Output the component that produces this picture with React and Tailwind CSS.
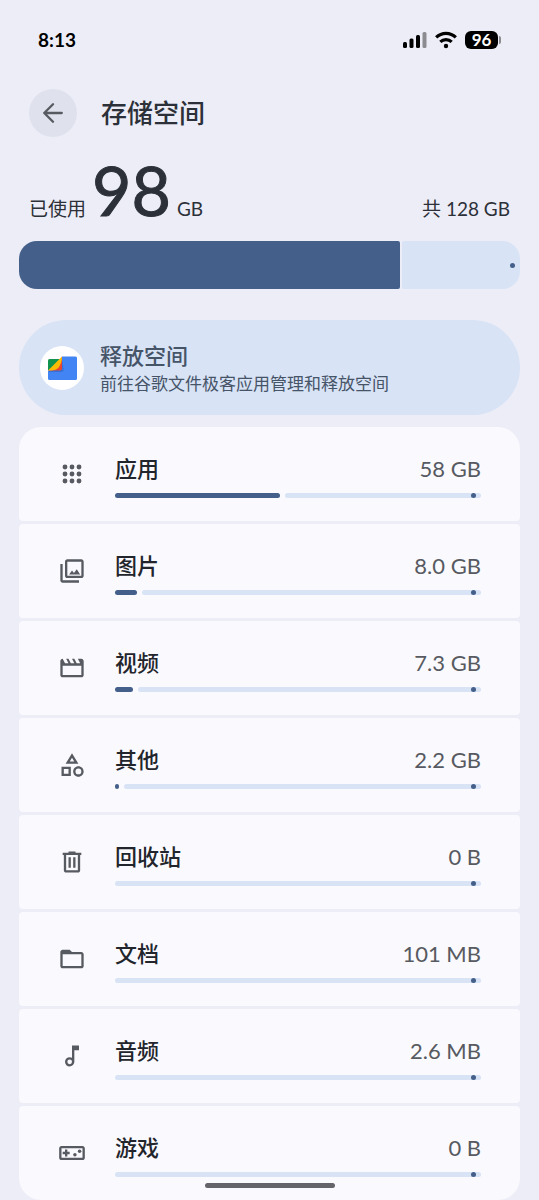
import React from 'react';

const AppsIcon = () => (
  <g>
    {[6, 12, 18].map((y) =>
      [6, 12, 18].map((x) => <circle key={`${x}-${y}`} cx={x} cy={y} r="2.1" />)
    )}
  </g>
);

const ImagesIcon = () => (
  <g>
    <path d="M20 4v12H8V4h12m0-2H8c-1.100 0-2 .9-2 2v12c0 1.100.9 2 2 2h12c1.100 0 2-.9 2-2V4c0-1.100-.9-2-2-2z" />
    <path d="M9.500 15l2.500-3.400 1.700 2.200 2.400-3.200L19 15z" />
    <path d="M2 6v14c0 1.100.9 2 2 2h14v-2H4V6H2z" />
  </g>
);

const VideoIcon = () => (
  <path d="M4 4l2 4h3L7 4h2l2 4h3l-2-4h2l2 4h3l-2-4h3c1.100 0 2 .9 2 2v12c0 1.100-.9 2-2 2H4c-1.100 0-2-.9-2-2V6c0-1.100.9-2 2-2zm0 6v8h16v-8H4z" />
);

const OtherIcon = () => (
  <path d="M12 2l-5.500 9h11L12 2zm0 3.840L13.930 9h-3.870L12 5.840zM17.500 13c-2.490 0-4.500 2.010-4.500 4.500s2.010 4.500 4.500 4.500 4.500-2.010 4.500-4.500-2.010-4.500-4.500-4.500zm0 7a2.500 2.500 0 010-5 2.500 2.500 0 010 5zM3 21.500h8v-8H3v8zm2-6h4v4H5v-4z" />
);

const TrashIcon = () => (
  <path d="M9 3v1H4v2h1v13c0 1.100.9 2 2 2h10c1.100 0 2-.9 2-2V6h1V4h-5V3H9zM7 6h10v13H7V6zm2 2v9h2V8H9zm4 0v9h2V8h-2z" />
);

const FolderIcon = () => (
  <path d="M4 20c-1.100 0-2-.9-2-2V6c0-1.100.9-2 2-2h6l2 2h8c1.100 0 2 .9 2 2v10c0 1.100-.9 2-2 2H4zm0-2h16V8H4v10z" />
);

const AudioIcon = () => (
  <path d="M12 3l.01 10.550c-.59-.34-1.270-.55-2-.55a4 4 0 100 8c2.220 0 3.990-1.790 3.990-4V7h4V3h-6zm-1.990 16a2 2 0 010-4 2 2 0 010 4z" />
);

const GamesIcon = () => (
  <g>
    <path d="M21 6H3c-1.100 0-2 .9-2 2v8c0 1.100.9 2 2 2h18c1.100 0 2-.9 2-2V8c0-1.100-.9-2-2-2zm0 10H3V8h18v8z" />
    <path d="M6 15h2v-2h2v-2H8V9H6v2H4v2h2z" />
    <circle cx="14.500" cy="13.500" r="1.500" />
    <circle cx="18.500" cy="10.500" r="1.500" />
  </g>
);

const categories = [
  { name: '应用', size: '58 GB', percent: 45, icon: AppsIcon },
  { name: '图片', size: '8.0 GB', percent: 6, icon: ImagesIcon },
  { name: '视频', size: '7.3 GB', percent: 5, icon: VideoIcon },
  { name: '其他', size: '2.2 GB', percent: 1, icon: OtherIcon },
  { name: '回收站', size: '0 B', percent: 0, icon: TrashIcon },
  { name: '文档', size: '101 MB', percent: 0, icon: FolderIcon },
  { name: '音频', size: '2.6 MB', percent: 0, icon: AudioIcon },
  { name: '游戏', size: '0 B', percent: 0, icon: GamesIcon },
];

const StatusBar = () => (
  <div className="flex h-20 items-center justify-between px-[19px] text-black">
    <span className="text-[19px] leading-6 font-bold">8:13</span>
    <div className="flex items-center gap-2">
      <svg width="24" height="18" viewBox="0 0 24 18" aria-hidden="true">
        <rect x="0" y="11" width="4" height="6" rx="1.500" />
        <rect x="6.500" y="7.500" width="4" height="9.500" rx="1.500" />
        <rect x="13" y="4" width="4" height="13" rx="1.500" />
        <rect x="19.500" y="1" width="4" height="16" rx="1.500" fill="#8b8b90" />
      </svg>
      <svg width="22" height="18" viewBox="0 0 22 18" fill="none" stroke="currentColor" strokeWidth="3.200" aria-hidden="true">
        <path d="M1.200 6.400C6.700.9 15.300.9 20.800 6.400" />
        <path d="M5.300 10.800c3.200-3 8.200-3 11.400 0" />
        <circle cx="11" cy="15" r="2.200" fill="currentColor" stroke="none" />
      </svg>
      <div className="flex items-center gap-px">
        <span className="flex h-[18px] w-[33px] items-center justify-center rounded-md bg-black text-[17px] leading-[18px] font-bold text-white">
          96
        </span>
        <span className="h-2 w-[2px] rounded-r-full bg-[#8b8b90]" />
      </div>
    </div>
  </div>
);

const FilesLogo = () => (
  <svg className="size-11 shrink-0" viewBox="0 0 44 44" aria-hidden="true">
    <circle cx="22" cy="22" r="22" fill="#fff" />
    <path d="M8 14.500a1.500 1.500 0 011.500-1.500H20v11H8z" fill="#12924f" />
    <path d="M22 10.500h13.500A1.500 1.500 0 0137 12v20.500a1.500 1.500 0 01-1.500 1.500h-26A1.500 1.500 0 018 32.500V24.500l14-6z" fill="#4284f3" />
    <path d="M22 14l1.500 9.500a2.500 2.500 0 01-2.500 2.500H9l1-2z" fill="#3570d8" />
    <path d="M22 10.500v12a2 2 0 01-2 2H8L18 18z" fill="#e94335" />
    <path d="M22 10.500L8 24.500c5 0 9-.5 11-3.500 1.800-2.700 3-6 3-10.500z" fill="#fbbc05" />
  </svg>
);

const UsageTrack = ({ name, percent }) => (
  <div
    role="progressbar"
    aria-label={name}
    aria-valuenow={percent}
    className="flex h-[5px] gap-[5px]"
  >
    {percent > 0 && (
      <span className="shrink-0 rounded-full bg-[#44608a]" style={{ width: `${percent}%` }} />
    )}
    <span className="flex flex-1 justify-end rounded-full bg-[#d8e3f6] pr-[5px]">
      <span className="size-[5px] rounded-full bg-[#44608a]" />
    </span>
  </div>
);

const CategoryRow = ({ category }) => {
  const Icon = category.icon;
  return (
    <li className="overflow-hidden rounded bg-[#faf9fe] first:rounded-t-[22px] last:rounded-b-[22px]">
      <a href="#" className="flex h-[94px] items-center px-[39px]">
        <svg className="size-7 shrink-0 text-[#575a61]" viewBox="0 0 24 24" fill="currentColor" aria-hidden="true">
          <Icon />
        </svg>
        <div className="ml-[29px] flex-1 pt-[2px]">
          <div className="mb-2 flex items-center justify-between text-[22px] leading-8">
            <span className="font-medium text-[#22252b]">{category.name}</span>
            <span className="text-[#575a61]">{category.size}</span>
          </div>
          <UsageTrack name={category.name} percent={category.percent} />
        </div>
      </a>
    </li>
  );
};

const App = () => {
  return (
    <div
      lang="zh-CN"
      className="min-h-screen bg-[#ecedf6] px-[19px] font-['Lato','Noto_Sans_CJK_SC',sans-serif] text-[#2c3038]"
    >
      <StatusBar />

      <header className="flex items-center gap-6 px-[10px] pt-[9px]">
        <button
          type="button"
          aria-label="返回"
          className="flex size-12 items-center justify-center rounded-full bg-[#dfe2ed] text-[#575a61]"
        >
          <svg className="size-7" viewBox="0 0 24 24" fill="none" stroke="currentColor" strokeWidth="2" strokeLinecap="round" strokeLinejoin="round" aria-hidden="true">
            <path d="M19.500 12H4.500M12 4.500L4.500 12l7.500 7.500" />
          </svg>
        </button>
        <h1 className="text-[26px] leading-9 font-medium">存储空间</h1>
      </header>

      <main>
        <section className="mt-[17px]">
          <div className="flex items-baseline justify-between px-[10px] text-[19px] leading-6">
            <p className="flex items-baseline gap-[6px]">
              <span>已使用</span>
              <span className="text-[68px] leading-[72px] [-webkit-text-stroke:1px_currentColor]">98</span>
              <span>GB</span>
            </p>
            <p>共 128 GB</p>
          </div>
          <div role="progressbar" aria-label="已使用" aria-valuenow={76} className="mt-[15px] flex h-12 gap-[2px]">
            <span className="w-[76%] rounded-l-[18px] rounded-r-[2px] bg-[#44608a]" />
            <span className="flex flex-1 items-center justify-end rounded-l-[2px] rounded-r-[18px] bg-[#d8e3f6] pr-[5px]">
              <span className="size-[5px] rounded-full bg-[#44608a]" />
            </span>
          </div>
        </section>

        <a href="#" className="mt-[31px] flex h-[95px] items-center gap-4 rounded-full bg-[#d8e3f6] px-[21px] text-[#465468]">
          <FilesLogo />
          <span className="flex flex-col pt-1">
            <span className="text-[22px] leading-7 font-medium">释放空间</span>
            <span className="text-[17px] leading-7">前往谷歌文件极客应用管理和释放空间</span>
          </span>
        </a>

        <ul className="mt-3 flex flex-col gap-[3px]">
          {categories.map((category) => (
            <CategoryRow key={category.name} category={category} />
          ))}
        </ul>
      </main>

      <div className="fixed bottom-3 left-1/2 h-[5px] w-[130px] -translate-x-1/2 rounded-full bg-[#656569]" />
    </div>
  );
};

export default App;
